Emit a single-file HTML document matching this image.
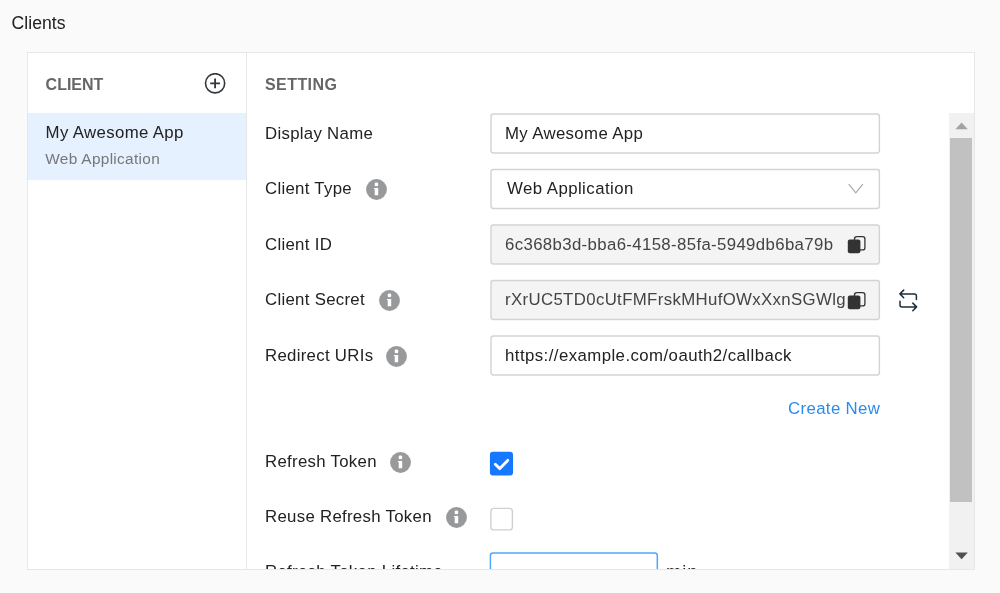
<!DOCTYPE html>
<html><head><meta charset="utf-8">
<style>
*{box-sizing:border-box;margin:0;padding:0}
html,body{width:1000px;height:593px;overflow:hidden;background:#fafafa;font-family:"Liberation Sans",sans-serif;color:#222}
.title{position:absolute;left:11.5px;top:12px;letter-spacing:.05px;font-size:17.6px;line-height:22px;color:#222}
.panel{position:absolute;left:27px;top:52px;width:948px;height:518px;background:#fff;border:1px solid #e7e7e7;overflow:hidden}
.left{position:absolute;left:0;top:0;width:219px;height:516px;border-right:1px solid #e6e6e6}
.hd{position:absolute;font-size:16px;font-weight:bold;color:#666;letter-spacing:.1px;line-height:20px}
.sel{position:absolute;left:0;top:60px;width:218px;height:67px;background:#e6f1ff}
.sel .n{position:absolute;left:17.6px;top:9px;letter-spacing:.36px;font-size:16.8px;line-height:22px;color:#222}
.sel .t{position:absolute;left:17.3px;top:36px;font-size:15.4px;letter-spacing:.31px;line-height:20px;color:#777}
.lbl{position:absolute;left:237px;font-size:16.8px;letter-spacing:.3px;line-height:22px;color:#222;white-space:nowrap}
.inp{position:absolute;left:462px;width:390px;height:41px;border:1px solid transparent;font-size:16.8px;letter-spacing:.36px;line-height:39px;padding-left:14px;color:#222;white-space:nowrap;overflow:hidden}
.inp.dis{color:#444}
.info{position:absolute;width:21px;height:21px}
.abs{position:absolute}
.link{position:absolute;font-size:16.8px;letter-spacing:.37px;line-height:22px;color:#2a8bee;white-space:nowrap}
.sb{position:absolute;left:921px;top:60px;width:25px;height:456px;background:#f1f1f1}
.sb .th{position:absolute;left:1px;top:25px;width:22px;height:364px;background:#c1c1c1}
.cb{position:absolute;left:462px;width:23px;height:23px;border-radius:3px}
</style></head><body>
<div id="wrap" style="position:absolute;left:0;top:0;width:1000px;height:593px;will-change:transform">
<div class="title">Clients</div>
<div class="panel">
  <div class="left">
    <div class="hd" style="left:17.6px;top:22px;letter-spacing:0px">CLIENT</div>
    <svg class="abs" style="left:176px;top:20px" width="22" height="22" viewBox="0 0 22 22"><circle cx="11.1" cy="10.3" r="9.6" fill="none" stroke="#33373b" stroke-width="1.6"/><path d="M11.1 5.4v9.8M6.2 10.3h9.8" stroke="#33373b" stroke-width="1.8" fill="none"/></svg>
    <div class="sel"><div class="n">My Awesome App</div><div class="t">Web Application</div></div>
  </div>
  <div class="hd" style="left:237px;top:22px;letter-spacing:.43px">SETTING</div>
  <svg class="abs" style="left:0;top:0" width="946" height="516" viewBox="0 0 946 516"><rect x="463.0" y="61.0" width="388.4" height="39" rx="2.4" fill="#fff" stroke="#d2d4d4" stroke-width="1.4"/><rect x="463.0" y="116.5" width="388.4" height="39" rx="2.4" fill="#fff" stroke="#d2d4d4" stroke-width="1.4"/><rect x="463.0" y="172.0" width="388.4" height="39" rx="2.4" fill="#f4f4f4" stroke="#d2d4d4" stroke-width="1.4"/><rect x="463.0" y="227.5" width="388.4" height="39" rx="2.4" fill="#f4f4f4" stroke="#d2d4d4" stroke-width="1.4"/><rect x="463.0" y="283.0" width="388.4" height="39" rx="2.4" fill="#fff" stroke="#d2d4d4" stroke-width="1.4"/><rect x="462.9" y="455.4" width="21.5" height="21.5" rx="3" fill="#fff" stroke="#cfd0d0" stroke-width="1.4"/><rect x="461.9" y="398.8" width="23.1" height="23.6" rx="3" fill="#1677ff"/><path d="M467.3 411.3L471.8 415.6L479.7 407.4" fill="none" stroke="#fff" stroke-width="2.9" stroke-linecap="round" stroke-linejoin="round"/><rect x="462.4" y="500.1" width="166.9" height="40" rx="2.5" fill="#fff" stroke="#4da6ff" stroke-width="1.5"/></svg>

  <div class="lbl" style="top:70px">Display Name</div>
  <div class="inp" style="top:60px">My Awesome App</div>

  <div class="lbl" style="top:125px">Client Type</div>
  <svg class="info" style="left:338px;top:125.5px" viewBox="0 0 21 21"><circle cx="10.5" cy="10.5" r="10.4" fill="#97999b"/><path d="M7.9 8.9H12.2V16.3H8.7V9.9H7.9Z" fill="#fff"/><rect x="8.7" y="3.5" width="3.5" height="3.7" rx="1.3" fill="#fff"/></svg>
  <div class="inp" style="top:116px;padding-left:16px;line-height:37px;letter-spacing:.45px">Web Application</div>
  <svg class="abs" style="left:819px;top:129px" width="18" height="14" viewBox="0 0 18 14"><path d="M1.7 2.2L8.8 10.9L15.9 2.2" fill="none" stroke="#aaa" stroke-width="1.2"/></svg>

  <div class="lbl" style="top:181px">Client ID</div>
  <div class="inp dis" style="top:171px">6c368b3d-bba6-4158-85fa-5949db6ba79b</div>
  <svg class="abs" style="left:818px;top:181.4px" width="22" height="22" viewBox="0 0 22 22"><rect x="8.5" y="2.7" width="10.4" height="13.2" rx="2.2" fill="#f4f4f4" stroke="#333" stroke-width="1.3"/><rect x="1.8" y="5.6" width="12.6" height="13.6" rx="2" fill="#333"/></svg>

  <div class="lbl" style="top:236px">Client Secret</div>
  <svg class="info" style="left:351px;top:236.5px" viewBox="0 0 21 21"><circle cx="10.5" cy="10.5" r="10.4" fill="#97999b"/><path d="M7.9 8.9H12.2V16.3H8.7V9.9H7.9Z" fill="#fff"/><rect x="8.7" y="3.5" width="3.5" height="3.7" rx="1.3" fill="#fff"/></svg>
  <div class="inp dis" style="top:227px;line-height:37px">rXrUC5TD0cUtFMFrskMHufOWxXxnSGWlg</div>
  <svg class="abs" style="left:818px;top:236.6px" width="22" height="22" viewBox="0 0 22 22"><rect x="8.5" y="2.7" width="10.4" height="13.2" rx="2.2" fill="#f4f4f4" stroke="#333" stroke-width="1.3"/><rect x="1.8" y="5.6" width="12.6" height="13.6" rx="2" fill="#333"/></svg>
  <svg class="abs" style="left:869px;top:235px" width="24" height="26" viewBox="0 0 24 26"><path d="M2.9 5.9H17.4Q19.4 5.9 19.4 7.9V11.6M6.7 2.1L2.9 5.9L6.7 9.7M19.6 18.9H5Q3 18.9 3 16.9V13.2M15.8 15.1L19.6 18.9L15.8 22.7" fill="none" stroke="#1f2d3d" stroke-width="1.5" stroke-linecap="round" stroke-linejoin="round"/></svg>

  <div class="lbl" style="top:292px">Redirect URIs</div>
  <svg class="info" style="left:358px;top:292.5px" viewBox="0 0 21 21"><circle cx="10.5" cy="10.5" r="10.4" fill="#97999b"/><path d="M7.9 8.9H12.2V16.3H8.7V9.9H7.9Z" fill="#fff"/><rect x="8.7" y="3.5" width="3.5" height="3.7" rx="1.3" fill="#fff"/></svg>
  <div class="inp" style="top:282px;letter-spacing:.44px">https://example.com/oauth2/callback</div>

  <div class="link" style="left:760px;top:345px">Create New</div>

  <div class="lbl" style="top:398px">Refresh Token</div>
  <svg class="info" style="left:362px;top:398.5px" viewBox="0 0 21 21"><circle cx="10.5" cy="10.5" r="10.4" fill="#97999b"/><path d="M7.9 8.9H12.2V16.3H8.7V9.9H7.9Z" fill="#fff"/><rect x="8.7" y="3.5" width="3.5" height="3.7" rx="1.3" fill="#fff"/></svg>

  <div class="lbl" style="top:453px">Reuse Refresh Token</div>
  <svg class="info" style="left:418px;top:453.5px" viewBox="0 0 21 21"><circle cx="10.5" cy="10.5" r="10.4" fill="#97999b"/><path d="M7.9 8.9H12.2V16.3H8.7V9.9H7.9Z" fill="#fff"/><rect x="8.7" y="3.5" width="3.5" height="3.7" rx="1.3" fill="#fff"/></svg>

  <div class="lbl" style="top:508px">Refresh Token Lifetime</div>
  <div class="lbl" style="left:638px;top:508px;font-size:18.2px;letter-spacing:1px">min</div>

  <div class="sb"><div class="th"></div>
    <svg class="abs" style="left:6px;top:9px" width="14" height="8" viewBox="0 0 14 8"><path d="M0.4 7.2L6.6 0.6L12.8 7.2Z" fill="#a3a3a3"/></svg>
    <svg class="abs" style="left:6px;top:439px" width="14" height="8" viewBox="0 0 14 8"><path d="M0.4 0.6H12.8L6.6 7.2Z" fill="#505050"/></svg>
  </div>
</div>
</div>
</body></html>
